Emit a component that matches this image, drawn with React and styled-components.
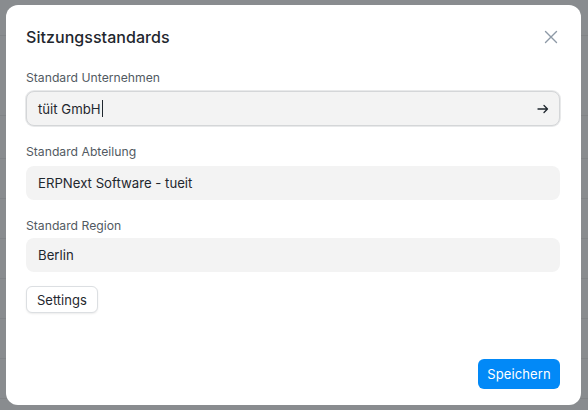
import React from "react";
import styled, { createGlobalStyle } from "styled-components";

const Global = createGlobalStyle`
  html, body { margin: 0; padding: 0; }
  body {
    width: 588px; height: 410px; overflow: hidden;
    font-family: Inter, "Noto Sans", sans-serif;
    background: #898c8f;
  }
`;

const Backdrop = styled.div`
  position: relative;
  width: 588px;
  height: 410px;
  background: #898c8f;
  overflow: hidden;
`;

const BgRows = styled.div`
  position: absolute;
  inset: 0;
  display: flex;
  flex-direction: column;
`;

const BgRow = styled.div`
  height: ${(p) => p.h}px;
  flex: none;
  border-bottom: 1px solid #818487;
  box-sizing: border-box;
`;

const Modal = styled.div`
  position: absolute;
  left: 6px;
  top: 5px;
  width: 575px;
  height: 400px;
  background: #fff;
  border-radius: 12px;
  box-sizing: border-box;
  padding: 20px 21px 16px 20px;
  display: flex;
  flex-direction: column;
`;

const Header = styled.div`
  display: flex;
  align-items: center;
  justify-content: space-between;
  height: 24px;
`;

const Title = styled.h3`
  margin: 0;
  font-size: 16px;
  font-weight: 500;
  color: #1f272e;
  letter-spacing: 0.05px;
`;

const Close = styled.button`
  border: 0;
  background: none;
  padding: 0;
  margin-right: 2px;
  width: 14px;
  height: 14px;
  display: flex;
  color: #8d99a6;
  cursor: pointer;
`;

const Field = styled.div`
  display: flex;
  flex-direction: column;
  margin-top: ${(p) => p.mt}px;
`;

const Label = styled.label`
  font-size: 12.2px;
  color: #525a62;
  height: 18px;
  line-height: 18px;
  margin-top: ${(p) => p.top}px;
  margin-bottom: ${(p) => p.mb}px;
`;

const Control = styled.div`
  height: ${(p) => (p.focused ? 35 : 34)}px;
  box-sizing: border-box;
  background: #f3f3f3;
  border-radius: 8px;
  border: ${(p) => (p.focused ? "1.5px solid #d4d6d8" : "none")};
  box-shadow: ${(p) => (p.focused ? "0 0 0 1px #e8e9ea" : "none")};
  display: flex;
  align-items: center;
  padding: 0 ${(p) => (p.focused ? 10 : 12)}px 0 ${(p) => (p.focused ? 11 : 12)}px;
  font-size: 13.2px;
  color: #1f272e;
`;

const Value = styled.span`
  flex: 1;
  display: flex;
  align-items: center;
`;

const Caret = styled.span`
  display: inline-block;
  width: 1px;
  height: 17px;
  background: #1f272e;
  margin-left: 1px;
`;

const SmallButton = styled.button`
  align-self: flex-start;
  margin-top: 14px;
  height: 27px;
  padding: 0 10px;
  background: #fff;
  border: 1px solid #dcdfe2;
  border-radius: 6px;
  box-shadow: 0 1px 2px rgba(0, 0, 0, 0.08);
  font-family: inherit;
  font-size: 13px;
  color: #1f272e;
`;

const Footer = styled.div`
  margin-top: auto;
  display: flex;
  justify-content: flex-end;
`;

const Primary = styled.button`
  height: 30px;
  width: 82px;
  padding: 0;
  background: #0289f7;
  color: #fff;
  border: 0;
  border-radius: 6px;
  font-family: inherit;
  font-size: 13px;
  letter-spacing: 0.1px;
`;

export default function App() {
  const rows = [36, 80, 43, 40, 40, 40, 40, 40, 40];
  return (
    <>
      <Global />
      <Backdrop>
        <BgRows>
          {rows.map((h, i) => (
            <BgRow key={i} h={h} />
          ))}
        </BgRows>
        <Modal>
          <Header>
            <Title>Sitzungsstandards</Title>
            <Close aria-label="Close">
              <svg width="14" height="14" viewBox="0 0 14 14" fill="none">
                <path d="M1.5 1.5l11 11M12.5 1.5l-11 11" stroke="currentColor" strokeWidth="1.4" strokeLinecap="round" />
              </svg>
            </Close>
          </Header>
          <Field mt={18}>
            <Label top={2} mb={4}>Standard Unternehmen</Label>
            <Control focused>
              <Value>
                tüit GmbH
                <Caret />
              </Value>
              <svg width="12" height="10" viewBox="0 0 12 10" fill="none">
                <path d="M1 5h9.5M7 1.5L10.5 5 7 8.5" stroke="#1f272e" strokeWidth="1.3" strokeLinecap="round" strokeLinejoin="round" />
              </svg>
            </Control>
          </Field>
          <Field mt={16}>
            <Label top={1} mb={5}>Standard Abteilung</Label>
            <Control>
              <Value>ERPNext Software - tueit</Value>
            </Control>
          </Field>
          <Field mt={16}>
            <Label top={1} mb={3}>Standard Region</Label>
            <Control>
              <Value>Berlin</Value>
            </Control>
          </Field>
          <SmallButton>Settings</SmallButton>
          <Footer>
            <Primary>Speichern</Primary>
          </Footer>
        </Modal>
      </Backdrop>
    </>
  );
}
